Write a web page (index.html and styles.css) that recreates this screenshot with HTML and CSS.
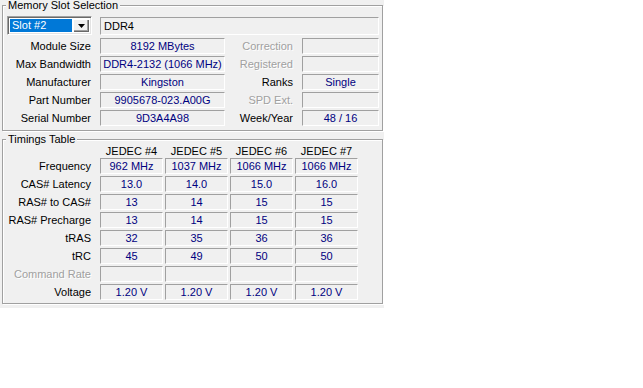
FILE: index.html
```html
<!DOCTYPE html>
<html lang="en">
<head>
    <meta charset="UTF-8">
    <title>SPD</title>
    <link rel="stylesheet" href="styles.css">
</head>
<body>
    <div class="panel">
        <fieldset class="group slot-group">
            <legend>Memory Slot Selection</legend>
            <div class="slot-grid">
                <div class="combo">
                    <span class="combo-value">Slot #2</span>
                    <span class="combo-btn"><svg width="7" height="4" viewBox="0 0 7 4"><path d="M0 0h7L3.5 4z" fill="#000"/></svg></span>
                </div>
                <div class="field wide left">DDR4</div>

                <div class="label">Module Size</div>
                <div class="field">8192 MBytes</div>
                <div class="label disabled">Correction</div>
                <div class="field"></div>

                <div class="label">Max Bandwidth</div>
                <div class="field">DDR4-2132 (1066 MHz)</div>
                <div class="label disabled">Registered</div>
                <div class="field"></div>

                <div class="label">Manufacturer</div>
                <div class="field">Kingston</div>
                <div class="label">Ranks</div>
                <div class="field">Single</div>

                <div class="label">Part Number</div>
                <div class="field">9905678-023.A00G</div>
                <div class="label disabled">SPD Ext.</div>
                <div class="field"></div>

                <div class="label">Serial Number</div>
                <div class="field">9D3A4A98</div>
                <div class="label">Week/Year</div>
                <div class="field">48 / 16</div>
            </div>
        </fieldset>

        <fieldset class="group timings-group">
            <legend>Timings Table</legend>
            <div class="timings-grid">
                <div></div>
                <div class="head">JEDEC #4</div>
                <div class="head">JEDEC #5</div>
                <div class="head">JEDEC #6</div>
                <div class="head">JEDEC #7</div>

                <div class="label">Frequency</div>
                <div class="field">962 MHz</div>
                <div class="field">1037 MHz</div>
                <div class="field">1066 MHz</div>
                <div class="field">1066 MHz</div>

                <div class="label">CAS# Latency</div>
                <div class="field">13.0</div>
                <div class="field">14.0</div>
                <div class="field">15.0</div>
                <div class="field">16.0</div>

                <div class="label">RAS# to CAS#</div>
                <div class="field">13</div>
                <div class="field">14</div>
                <div class="field">15</div>
                <div class="field">15</div>

                <div class="label">RAS# Precharge</div>
                <div class="field">13</div>
                <div class="field">14</div>
                <div class="field">15</div>
                <div class="field">15</div>

                <div class="label">tRAS</div>
                <div class="field">32</div>
                <div class="field">35</div>
                <div class="field">36</div>
                <div class="field">36</div>

                <div class="label">tRC</div>
                <div class="field">45</div>
                <div class="field">49</div>
                <div class="field">50</div>
                <div class="field">50</div>

                <div class="label disabled">Command Rate</div>
                <div class="field"></div>
                <div class="field"></div>
                <div class="field"></div>
                <div class="field"></div>

                <div class="label">Voltage</div>
                <div class="field">1.20 V</div>
                <div class="field">1.20 V</div>
                <div class="field">1.20 V</div>
                <div class="field">1.20 V</div>
            </div>
        </fieldset>
    </div>
</body>
</html>
```

FILE: styles.css
```css
body {
    margin: 0;
    background: #fff;
    font-family: "Liberation Sans", Arial, sans-serif;
    font-size: 11px;
    color: #000;
}
.panel {
    width: 384px;
    height: 308px;
    box-sizing: border-box;
    padding: 0 1px 0 2px;
    background: #f0f0f0;
}
.group {
    margin: 0;
    padding: 0 3px 0 0;
    min-width: 0;
    border: 1px solid #a0a0a0;
    box-shadow: inset 1px 1px 0 #fff, 1px 1px 0 #fff;
}
.group legend {
    margin-left: 3px;
    padding: 0 2px;
    line-height: 11px;
    background: #f0f0f0;
}
.slot-group {
    padding-top: 5px;
    padding-bottom: 4px;
}
.timings-group {
    margin-top: 3px;
    padding-bottom: 1px;
}
.slot-grid {
    display: grid;
    grid-template-columns: 97px 125px 77px 77px;
    grid-template-rows: 20px;
    grid-auto-rows: 16px;
    row-gap: 2px;
}
.timings-grid {
    display: grid;
    grid-template-columns: 95px repeat(4, 63px);
    grid-template-rows: 13px;
    grid-auto-rows: 18px;
    column-gap: 2px;
}
.timings-grid .field {
    margin-bottom: 2px;
}
.label {
    text-align: right;
    padding-right: 9px;
    line-height: 16px;
    white-space: nowrap;
}
.timings-grid .label {
    padding-right: 7px;
}
.disabled {
    color: #a0a0a0;
    text-shadow: 1px 1px 0 #fff;
}
.head {
    text-align: center;
    line-height: 12px;
}
.field {
    box-sizing: border-box;
    height: 16px;
    border: 1px solid;
    border-color: #a0a0a0 #fff #fff #a0a0a0;
    color: #000080;
    text-align: center;
    line-height: 14px;
    white-space: nowrap;
    overflow: hidden;
}
.field.wide {
    grid-column: 2 / 5;
    height: 18px;
    margin-top: 1px;
    line-height: 16px;
}
.field.left {
    text-align: left;
    padding-left: 3px;
    color: #000;
}
.combo {
    display: flex;
    box-sizing: border-box;
    width: 85px;
    height: 19px;
    margin: 0 0 0 4px;
    padding: 2px;
    background: #fff;
    border: 1px solid;
    border-color: #a0a0a0 #fff #fff #a0a0a0;
    box-shadow: inset 1px 1px 0 #696969, inset -1px -1px 0 #e3e3e3;
}
.combo-value {
    flex: 1;
    background: #0078d7;
    color: #fff;
    padding-left: 2px;
    line-height: 13px;
}
.combo-btn {
    display: flex;
    align-items: center;
    justify-content: center;
    width: 16px;
    margin-left: 1px;
    background: #f0f0f0;
    box-shadow: inset 1px 1px 0 #fff, inset -1px -1px 0 #696969, inset -2px -2px 0 #a0a0a0;
}
```
